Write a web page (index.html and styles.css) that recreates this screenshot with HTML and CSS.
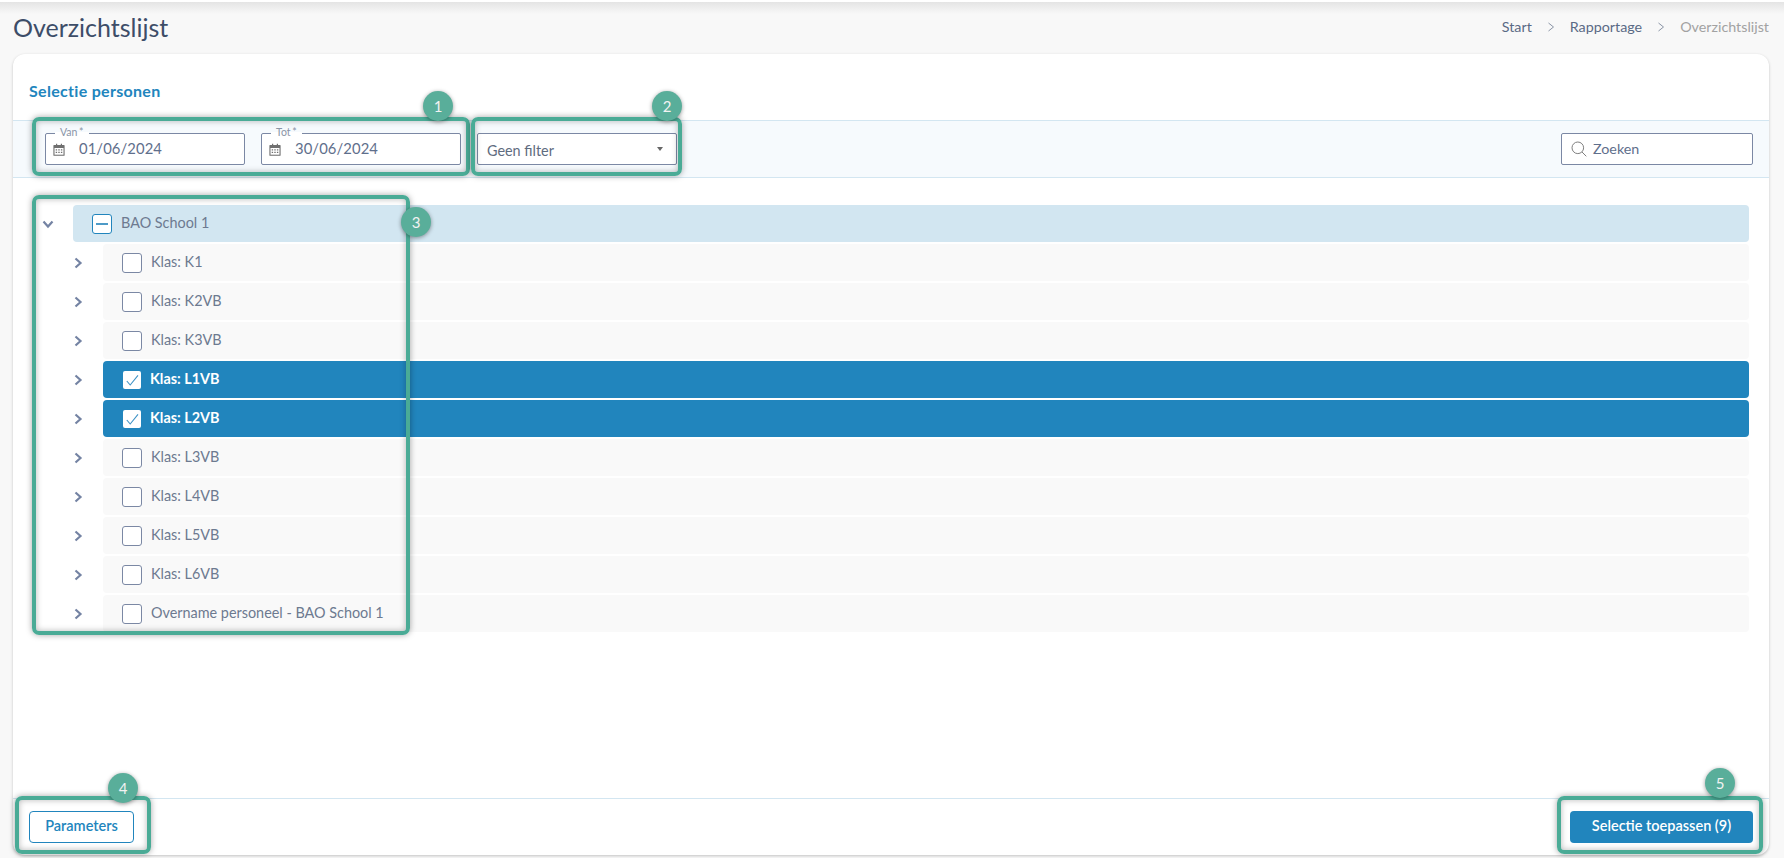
FILE: index.html
```html
<!DOCTYPE html>
<html lang="nl">
<head>
<meta charset="utf-8">
<title>Overzichtslijst</title>
<link rel="stylesheet" href="styles.css">
</head>
<body>
<div class="page">
  <header class="header">
    <h1 class="page-title">Overzichtslijst</h1>
    <nav class="crumbs">
      <span class="crumb">Start</span>
      <svg class="crumb-sep" viewBox="0 0 8 10"><path d="M1.500 1l5 4-5 4"/></svg>
      <span class="crumb">Rapportage</span>
      <svg class="crumb-sep" viewBox="0 0 8 10"><path d="M1.500 1l5 4-5 4"/></svg>
      <span class="crumb crumb-current">Overzichtslijst</span>
    </nav>
  </header>
  <main class="card">
    <div class="card-head"><h2 class="card-title">Selectie personen</h2></div>
    <div class="toolbar">
      <div class="field date-field">
        <span class="float-label">Van *</span>
        <svg class="cal" viewBox="0 0 12 13"><path class="cal-body" d="M1 2h2V.8h1.200V2h3.600V.8H9V2h2a.6.6 0 0 1 .6.6v9.600a.6.6 0 0 1-.6.6H1a.6.6 0 0 1-.6-.6V2.600A.6.6 0 0 1 1 2z"/><path class="cal-face" d="M1.500 5h9v6.700h-9z"/><path class="cal-dots" d="M2.700 6.200h1.400v1.200H2.700zM5.300 6.200h1.400v1.200H5.300zM7.900 6.200h1.400v1.200H7.900zM2.700 8.700h1.400v1.200H2.700zM5.300 8.700h1.400v1.200H5.300zM7.900 8.700h1.400v1.200H7.900z"/></svg>
        <span class="date-value">01/06/2024</span>
      </div>
      <div class="field date-field">
        <span class="float-label">Tot *</span>
        <svg class="cal" viewBox="0 0 12 13"><path class="cal-body" d="M1 2h2V.8h1.200V2h3.600V.8H9V2h2a.6.6 0 0 1 .6.6v9.600a.6.6 0 0 1-.6.6H1a.6.6 0 0 1-.6-.6V2.600A.6.6 0 0 1 1 2z"/><path class="cal-face" d="M1.500 5h9v6.700h-9z"/><path class="cal-dots" d="M2.700 6.200h1.400v1.200H2.700zM5.300 6.200h1.400v1.200H5.300zM7.900 6.200h1.400v1.200H7.900zM2.700 8.700h1.400v1.200H2.700zM5.300 8.700h1.400v1.200H5.300zM7.900 8.700h1.400v1.200H7.900z"/></svg>
        <span class="date-value">30/06/2024</span>
      </div>
      <div class="field select-field">
        <span class="select-value">Geen filter</span>
        <span class="caret"></span>
      </div>
      <div class="field search-field">
        <svg class="search-icon" viewBox="0 0 16 16"><circle cx="6.800" cy="6.800" r="5.800"/><path d="M11 11l4.300 4.300"/></svg>
        <span class="search-text">Zoeken</span>
      </div>
    </div>
    <div class="tree">
      <div class="tree-line">
        <svg class="chev" viewBox="0 0 12 12"><path d="M1.500 3.500L6 8.500l4.500-5"/></svg>
        <div class="row row-root">
          <span class="check check-mixed"><span class="dash"></span></span>
          <span class="row-label">BAO School 1</span>
        </div>
      </div>
      <div class="tree-line tree-child">
        <svg class="chev" viewBox="0 0 12 12"><path d="M3.500 1.500L8.500 6l-5 4.500"/></svg>
        <div class="row"><span class="check"></span><span class="row-label">Klas: K1</span></div>
      </div>
      <div class="tree-line tree-child">
        <svg class="chev" viewBox="0 0 12 12"><path d="M3.500 1.500L8.500 6l-5 4.500"/></svg>
        <div class="row"><span class="check"></span><span class="row-label">Klas: K2VB</span></div>
      </div>
      <div class="tree-line tree-child">
        <svg class="chev" viewBox="0 0 12 12"><path d="M3.500 1.500L8.500 6l-5 4.500"/></svg>
        <div class="row"><span class="check"></span><span class="row-label">Klas: K3VB</span></div>
      </div>
      <div class="tree-line tree-child">
        <svg class="chev" viewBox="0 0 12 12"><path d="M3.500 1.500L8.500 6l-5 4.500"/></svg>
        <div class="row row-selected"><span class="check check-on"><svg viewBox="0 0 18 18"><path d="M3.800 10l3.400 4L15 4.300"/></svg></span><span class="row-label">Klas: L1VB</span></div>
      </div>
      <div class="tree-line tree-child">
        <svg class="chev" viewBox="0 0 12 12"><path d="M3.500 1.500L8.500 6l-5 4.500"/></svg>
        <div class="row row-selected"><span class="check check-on"><svg viewBox="0 0 18 18"><path d="M3.800 10l3.400 4L15 4.300"/></svg></span><span class="row-label">Klas: L2VB</span></div>
      </div>
      <div class="tree-line tree-child">
        <svg class="chev" viewBox="0 0 12 12"><path d="M3.500 1.500L8.500 6l-5 4.500"/></svg>
        <div class="row"><span class="check"></span><span class="row-label">Klas: L3VB</span></div>
      </div>
      <div class="tree-line tree-child">
        <svg class="chev" viewBox="0 0 12 12"><path d="M3.500 1.500L8.500 6l-5 4.500"/></svg>
        <div class="row"><span class="check"></span><span class="row-label">Klas: L4VB</span></div>
      </div>
      <div class="tree-line tree-child">
        <svg class="chev" viewBox="0 0 12 12"><path d="M3.500 1.500L8.500 6l-5 4.500"/></svg>
        <div class="row"><span class="check"></span><span class="row-label">Klas: L5VB</span></div>
      </div>
      <div class="tree-line tree-child">
        <svg class="chev" viewBox="0 0 12 12"><path d="M3.500 1.500L8.500 6l-5 4.500"/></svg>
        <div class="row"><span class="check"></span><span class="row-label">Klas: L6VB</span></div>
      </div>
      <div class="tree-line tree-child">
        <svg class="chev" viewBox="0 0 12 12"><path d="M3.500 1.500L8.500 6l-5 4.500"/></svg>
        <div class="row"><span class="check"></span><span class="row-label">Overname personeel - BAO School 1</span></div>
      </div>
    </div>
    <footer class="card-foot">
      <button class="btn btn-outline">Parameters</button>
      <button class="btn btn-solid">Selectie toepassen (9)</button>
    </footer>
  </main>

  <div class="mark mark-1"></div>
  <div class="mark mark-2"></div>
  <div class="mark mark-3"></div>
  <div class="mark mark-4"></div>
  <div class="mark mark-5"></div>
  <span class="badge badge-1">1</span>
  <span class="badge badge-2">2</span>
  <span class="badge badge-3">3</span>
  <span class="badge badge-4">4</span>
  <span class="badge badge-5">5</span>
</div>
</body>
</html>
```

FILE: styles.css
```css
* { box-sizing: border-box; }
html, body { margin: 0; padding: 0; }
body {
  background: #f8f8f8;
  font-family: "Lato", "Noto Sans", sans-serif;
  color: #69768f;
  overflow: hidden;
}
.page {
  position: relative;
  width: 1784px;
  height: 858px;
  display: flex;
  flex-direction: column;
  border-top: 2px solid #fff;
}
.page::before {
  content: "";
  position: absolute;
  left: 0;
  right: 0;
  top: 0;
  height: 12px;
  background: linear-gradient(#e4e4e4, #f8f8f8);
}
.header {
  position: relative;
  height: 52px;
  flex: none;
  display: flex;
  align-items: center;
  justify-content: space-between;
  padding: 0 15px 0 13px;
}
.page-title {
  margin: 0 0 3px;
  font-size: 25px;
  font-weight: 400;
  color: #3d4d68;
}
.crumbs {
  display: flex;
  align-items: center;
  gap: 15px;
  font-size: 14.300px;
  margin-bottom: 3px;
}
.crumb { color: #5a6a85; }
.crumb-current { color: #a2a2a2; }
.crumb-sep { width: 8px; height: 10px; }
.crumb-sep path { fill: none; stroke: #8a94a6; stroke-width: 1; }

.card {
  flex: 1;
  margin: 0 15px 3px 13px;
  background: #fff;
  border-radius: 12px;
  box-shadow: 0 1px 3px rgba(0, 0, 0, .22);
  display: flex;
  flex-direction: column;
  min-height: 0;
}
.card-head {
  height: 66px;
  flex: none;
  display: flex;
  align-items: center;
  padding: 6px 0 0 16px;
}
.card-title {
  margin: 0;
  font-size: 16px;
  letter-spacing: .3px;
  font-weight: 700;
  color: #2185bd;
}
.toolbar {
  height: 58px;
  flex: none;
  display: flex;
  align-items: center;
  gap: 16px;
  padding: 0 16px 0 32px;
  background: #f6fafd;
  border-top: 1px solid #d3e6f1;
  border-bottom: 1px solid #d3e6f1;
}
.field {
  position: relative;
  height: 32px;
  background: #fff;
  border: 1px solid #7b88a4;
  border-radius: 2px;
  display: flex;
  align-items: center;
  font-size: 14.800px;
}
.date-field { width: 200px; padding-left: 7px; }
.float-label {
  position: absolute;
  left: 9px;
  top: -8px;
  padding: 0 5px;
  font-size: 10.500px;
  word-spacing: -1px;
  line-height: 12px;
  color: #8a94a6;
  background: linear-gradient(#f6fafd 50%, #fff 50%);
}
.cal { width: 12px; height: 13px; margin-right: 15px; }
.cal-body { fill: #6f6f6f; }
.cal-face { fill: #fff; }
.cal-dots { fill: #6f6f6f; }
.date-value { color: #5f6f8c; margin: -3px 0 0 -1px; letter-spacing: .1px; }
.select-field {
  width: 200px;
  padding: 3px 10px 0 9px;
  justify-content: space-between;
  font-size: 14.400px;
}
.select-value { color: #5f6c80; margin-top: -1px; }
.caret {
  width: 0;
  height: 0;
  margin: -3px 3px 0 0;
  border-left: 3.500px solid transparent;
  border-right: 3.500px solid transparent;
  border-top: 4px solid #666;
}
.search-field {
  width: 192px;
  margin-left: auto;
  padding-left: 9px;
  font-size: 14.300px;
}
.search-icon { width: 16px; height: 16px; margin-right: 6px; }
.search-icon circle, .search-icon path { fill: none; stroke: #7f7f7f; stroke-width: 1; }
.search-text { color: #5f6f8c; margin-top: -2px; }

.tree {
  flex: 1;
  min-height: 0;
  padding: 27px 20px 0 0;
  display: flex;
  flex-direction: column;
  gap: 2px;
}
.tree-line {
  display: flex;
  align-items: center;
  padding-left: 60px;
  position: relative;
}
.tree-child { padding-left: 90px; }
.chev {
  position: absolute;
  width: 12px;
  height: 12px;
  left: 29px;
  top: 12.500px;
}
.tree-child .chev { left: 59px; }
.chev path {
  fill: none;
  stroke: #7483a3;
  stroke-width: 2.200;
}
.row {
  flex: 1;
  height: 37px;
  display: flex;
  align-items: center;
  gap: 9px;
  padding-left: 19px;
  background: #f9f9f9;
  border-radius: 4px;
  font-size: 14.400px;
  color: #6d7a90;
}
.row-label { margin-top: -2px; }
.row-root { background: #d2e6f1; }
.row-selected {
  background: #2185bd;
  color: #fff;
  font-weight: 700;
}
.check {
  width: 20px;
  height: 20px;
  flex: none;
  background: #fff;
  border: 1px solid #7b88a4;
  border-radius: 3px;
  display: flex;
  align-items: center;
  justify-content: center;
}
.check-mixed { border-color: #2185bd; }
.dash { width: 12px; height: 2px; background: #4d9ac7; }
.check-on {
  border: 0;
  margin: 0 1px;
  width: 18px;
  height: 18px;
  border-radius: 2px;
}
.row-selected .row-label { margin-left: -1px; }
.check-on svg { width: 18px; height: 18px; }
.check-on path { fill: none; stroke: #3f93c6; stroke-width: 1.100; }

.card-foot {
  height: 57px;
  flex: none;
  display: flex;
  align-items: center;
  justify-content: space-between;
  padding: 0 16px;
  border-top: 1px solid #d3e6f1;
}
.btn {
  height: 32px;
  border-radius: 4px;
  font-family: inherit;
  font-size: 14.500px;
  font-weight: 600;
  padding: 0 0 4px;
}
.btn-outline {
  width: 105px;
  background: #fff;
  border: 1px solid #2185bd;
  color: #2185bd;
}
.btn-solid {
  width: 183px;
  background: #2185bd;
  border: 0;
  color: #fff;
}

.mark {
  position: absolute;
  border: 4px solid #4aab96;
  border-radius: 7px;
  box-shadow: 0 0 6px rgba(0, 0, 0, .35), inset 0 0 6px rgba(0, 0, 0, .28);
}
.mark-1 { left: 32px; top: 115px; width: 438px; height: 59px; }
.mark-2 { left: 471px; top: 115px; width: 211px; height: 59px; }
.mark-3 { left: 32px; top: 193px; width: 378px; height: 440px; }
.mark-4 { left: 15px; top: 794px; width: 136px; height: 58px; }
.mark-5 { left: 1557px; top: 794px; width: 206px; height: 58px; }
.badge {
  position: absolute;
  width: 30px;
  height: 30px;
  border-radius: 50%;
  background: #59ae9a;
  color: #f2f2f2;
  font-size: 15px;
  line-height: 30px;
  text-align: center;
  box-shadow: 0 1px 4px rgba(0, 0, 0, .4);
}
.badge-1 { left: 423px; top: 89px; }
.badge-2 { left: 652px; top: 89px; }
.badge-3 { left: 401px; top: 205px; }
.badge-4 { left: 108px; top: 771px; }
.badge-5 { left: 1705px; top: 766px; }
```
